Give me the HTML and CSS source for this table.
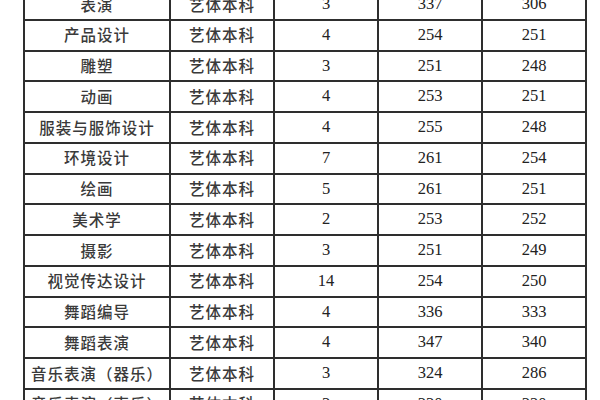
FILE: index.html
```html
<!DOCTYPE html>
<html lang="zh">
<head>
<meta charset="utf-8">
<link rel="stylesheet" href="styles.css">
</head>
<body>
<table class="score">
<colgroup>
<col class="c-major"><col class="c-type"><col class="c-num"><col class="c-num"><col class="c-num">
</colgroup>
<tbody>
<tr><td class="cn">表演</td><td class="cn">艺体本科</td><td>3</td><td>337</td><td>306</td></tr>
<tr><td class="cn">产品设计</td><td class="cn">艺体本科</td><td>4</td><td>254</td><td>251</td></tr>
<tr><td class="cn">雕塑</td><td class="cn">艺体本科</td><td>3</td><td>251</td><td>248</td></tr>
<tr><td class="cn">动画</td><td class="cn">艺体本科</td><td>4</td><td>253</td><td>251</td></tr>
<tr><td class="cn">服装与服饰设计</td><td class="cn">艺体本科</td><td>4</td><td>255</td><td>248</td></tr>
<tr><td class="cn">环境设计</td><td class="cn">艺体本科</td><td>7</td><td>261</td><td>254</td></tr>
<tr><td class="cn">绘画</td><td class="cn">艺体本科</td><td>5</td><td>261</td><td>251</td></tr>
<tr><td class="cn">美术学</td><td class="cn">艺体本科</td><td>2</td><td>253</td><td>252</td></tr>
<tr><td class="cn">摄影</td><td class="cn">艺体本科</td><td>3</td><td>251</td><td>249</td></tr>
<tr><td class="cn">视觉传达设计</td><td class="cn">艺体本科</td><td>14</td><td>254</td><td>250</td></tr>
<tr><td class="cn">舞蹈编导</td><td class="cn">艺体本科</td><td>4</td><td>336</td><td>333</td></tr>
<tr><td class="cn">舞蹈表演</td><td class="cn">艺体本科</td><td>4</td><td>347</td><td>340</td></tr>
<tr><td class="cn">音乐表演（器乐）</td><td class="cn">艺体本科</td><td>3</td><td>324</td><td>286</td></tr>
<tr><td class="cn">音乐表演（声乐）</td><td class="cn">艺体本科</td><td>3</td><td>330</td><td>320</td></tr>
</tbody>
</table>
</body>
</html>
```
FILE: styles.css
```css
html, body {
  margin: 0;
  padding: 0;
  background: #fff;
  overflow: hidden;
}
body {
  width: 600px;
  height: 400px;
}
.score {
  border-collapse: collapse;
  table-layout: fixed;
  width: 562px;
  margin: -12px 0 0 23px;
  color: #222;
  font-family: "Liberation Serif", "Noto Sans CJK SC", serif;
  font-size: 16.5px;
}
.c-major { width: 146px; }
.c-type { width: 104px; }
.c-num { width: 104px; }
.score tr {
  height: 30.75px;
}
.score td {
  border: 2px solid #2e2e2e;
  padding: 0;
  text-align: center;
  vertical-align: middle;
  line-height: 1;
  white-space: nowrap;
}
.score td.cn {
  font-family: "Noto Sans CJK SC", sans-serif;
  font-size: 15.5px;
  font-weight: 500;
  color: #3a3a3a;
  letter-spacing: 1px;
}
```
